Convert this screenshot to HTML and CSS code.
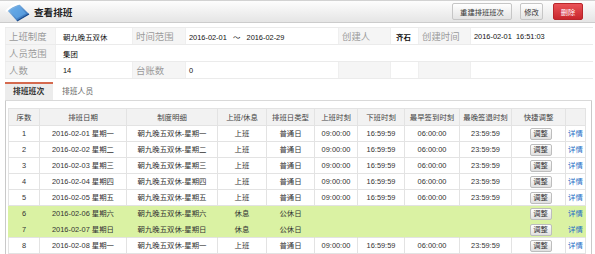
FILE: index.html
```html
<!DOCTYPE html>
<html lang="zh-CN">
<head>
    <meta charset="UTF-8">
    <title>查看排班</title>
    <link rel="stylesheet" href="styles.css">
</head>
<body>
    <div class="titlebar">
        <svg class="logo" width="26" height="20" viewBox="0 0 26 20">
            <defs>
                <linearGradient id="lg" x1="0" y1="0" x2="1" y2="1">
                    <stop offset="0" stop-color="#9ccdf4"/>
                    <stop offset="1" stop-color="#1f5fae"/>
                </linearGradient>
            </defs>
            <path d="M2 8 L14 2 L24 12 L12 19 Z" fill="url(#lg)"/>
            <path d="M5 8.6 L14 4 L21 11.4 L11.6 16.6 Z" fill="#5ea6e8" opacity="0.7"/>
            <path d="M12 19 L24 12" stroke="#17498c" stroke-width="1.2"/>
            <path d="M1 9.5 Q6 3 15.5 1.2" stroke="#fff" stroke-width="2" fill="none"/>
        </svg>
        <h1>查看排班</h1>
        <div class="actions">
            <button class="btn btn-rebuild">重建排班班次</button>
            <button class="btn btn-edit">修改</button>
            <button class="btn btn-del">删除</button>
        </div>
    </div>

    <table class="info">
        <colgroup>
            <col style="width:50px"><col style="width:77px"><col style="width:53px"><col style="width:153px">
            <col style="width:52px"><col style="width:28px"><col style="width:52px"><col style="width:122px">
        </colgroup>
        <tr>
            <td class="lbl">上班制度</td><td class="val first">朝九晚五双休</td>
            <td class="lbl">时间范围</td><td class="val">2016-02-01 &nbsp;&nbsp;～ &nbsp;&nbsp;2016-02-29</td>
            <td class="lbl">创建人</td><td class="val strong">齐石</td>
            <td class="lbl">创建时间</td><td class="val">2016-02-01 &nbsp;16:51:03</td>
        </tr>
        <tr>
            <td class="lbl">人员范围</td><td class="val first" colspan="7">集团</td>
        </tr>
        <tr>
            <td class="lbl">人数</td><td class="val first">14</td>
            <td class="lbl">台账数</td><td class="val">0</td>
            <td class="lbl"></td><td class="val"></td>
            <td class="lbl"></td><td class="val"></td>
        </tr>
    </table>

    <div class="tabs">
        <span class="tab active">排班班次</span>
        <span class="tab">排班人员</span>
    </div>

    <div class="panel">
        <table class="grid">
            <colgroup>
                <col style="width:32px"><col style="width:87px"><col style="width:91px"><col style="width:49px">
                <col style="width:48px"><col style="width:43px"><col style="width:47px"><col style="width:55px">
                <col style="width:52px"><col style="width:54px"><col style="width:20px">
            </colgroup>
            <thead>
                <tr>
                    <th>序数</th><th>排班日期</th><th>制度明细</th><th>上班/休息</th><th>排班日类型</th>
                    <th>上班时刻</th><th>下班时刻</th><th>最早签到时刻</th><th>最晚签退时刻</th><th>快捷调整</th><th></th>
                </tr>
            </thead>
            <tbody>
                <tr>
                    <td>1</td><td>2016-02-01 星期一</td><td>朝九晚五双休-星期一</td><td>上班</td><td>普通日</td>
                    <td>09:00:00</td><td>16:59:59</td><td>06:00:00</td><td>23:59:59</td>
                    <td><button class="adj">调整</button></td><td><a class="more" href="#">详情</a></td>
                </tr>
                <tr>
                    <td>2</td><td>2016-02-02 星期二</td><td>朝九晚五双休-星期二</td><td>上班</td><td>普通日</td>
                    <td>09:00:00</td><td>16:59:59</td><td>06:00:00</td><td>23:59:59</td>
                    <td><button class="adj">调整</button></td><td><a class="more" href="#">详情</a></td>
                </tr>
                <tr>
                    <td>3</td><td>2016-02-03 星期三</td><td>朝九晚五双休-星期三</td><td>上班</td><td>普通日</td>
                    <td>09:00:00</td><td>16:59:59</td><td>06:00:00</td><td>23:59:59</td>
                    <td><button class="adj">调整</button></td><td><a class="more" href="#">详情</a></td>
                </tr>
                <tr>
                    <td>4</td><td>2016-02-04 星期四</td><td>朝九晚五双休-星期四</td><td>上班</td><td>普通日</td>
                    <td>09:00:00</td><td>16:59:59</td><td>06:00:00</td><td>23:59:59</td>
                    <td><button class="adj">调整</button></td><td><a class="more" href="#">详情</a></td>
                </tr>
                <tr>
                    <td>5</td><td>2016-02-05 星期五</td><td>朝九晚五双休-星期五</td><td>上班</td><td>普通日</td>
                    <td>09:00:00</td><td>16:59:59</td><td>06:00:00</td><td>23:59:59</td>
                    <td><button class="adj">调整</button></td><td><a class="more" href="#">详情</a></td>
                </tr>
                <tr class="rest">
                    <td>6</td><td>2016-02-06 星期六</td><td>朝九晚五双休-星期六</td><td>休息</td><td>公休日</td>
                    <td></td><td></td><td></td><td></td>
                    <td><button class="adj">调整</button></td><td><a class="more" href="#">详情</a></td>
                </tr>
                <tr class="rest last">
                    <td>7</td><td>2016-02-07 星期日</td><td>朝九晚五双休-星期日</td><td>休息</td><td>公休日</td>
                    <td></td><td></td><td></td><td></td>
                    <td><button class="adj">调整</button></td><td><a class="more" href="#">详情</a></td>
                </tr>
                <tr>
                    <td>8</td><td>2016-02-08 星期一</td><td>朝九晚五双休-星期一</td><td>上班</td><td>普通日</td>
                    <td>09:00:00</td><td>16:59:59</td><td>06:00:00</td><td>23:59:59</td>
                    <td><button class="adj">调整</button></td><td><a class="more" href="#">详情</a></td>
                </tr>
            </tbody>
        </table>
    </div>
</body>
</html>
```

FILE: styles.css
```css
body {
    margin: 0;
    font-family: "Liberation Sans", "Noto Sans CJK SC", sans-serif;
    font-size: 7.4px;
    color: #333;
    background: #fff;
}

/* title bar */
.titlebar {
    display: flex;
    align-items: center;
    height: 21px;
    padding: 0 12px 0 5px;
    border-top: 1px solid #d2d2d2;
    border-bottom: 1px solid #cccccc;
    background: linear-gradient(#fdfdfd, #e5e5e5);
}
.titlebar h1 {
    flex: 1;
    margin: 0 0 0 3px;
    font-size: 9.6px;
    font-weight: bold;
    color: #222;
}
.actions {
    display: flex;
}
.btn {
    height: 17px;
    padding: 0;
    font-family: inherit;
    font-size: 7.3px;
    color: #333;
    border: 1px solid #c6c6c6;
    border-radius: 2px;
    background: linear-gradient(#ffffff, #e3e3e3);
}
.btn-rebuild { width: 60px; }
.btn-edit { width: 23px; margin-left: 8px; }
.btn-del {
    width: 30px;
    margin-left: 10px;
    color: #fff;
    border-color: #b8262b;
    background: linear-gradient(#ea5257, #c8272d);
}

/* info table */
.info {
    width: 587px;
    margin: 4px 0 0 5px;
    border-collapse: collapse;
    table-layout: fixed;
}
.info td {
    height: 16px;
    padding: 0 3px;
    border-top: 1px solid #ebebeb;
    border-bottom: 1px solid #ebebeb;
    border-left: 1px solid #efefef;
    white-space: nowrap;
    overflow: hidden;
}
.info .lbl {
    background: #f5f5f5;
    color: #9a9a9a;
    font-size: 9.4px;
}
.info .val {
    color: #111;
    font-size: 7.4px;
}
.info .first { padding-left: 7px; }
.info .strong { font-weight: bold; padding-left: 5px; }

/* tabs */
.tabs {
    display: flex;
    height: 18px;
    margin: 3px 3px 0 5px;
    border-bottom: 1px solid #d9d9d9;
}
.tab {
    padding: 0 9px;
    line-height: 16px;
    font-size: 7.8px;
    color: #666;
    border-top: 2px solid transparent;
}
.tab.active {
    width: 32px;
    padding: 0 8px;
    font-weight: bold;
    color: #333;
    background: #ececec;
    border-top-color: #d56a4f;
}

/* schedule grid */
.panel {
    margin: 0 3px 0 5px;
    padding: 7px 5px 0 2px;
    border-left: 1px solid #c9c9c9;
    border-right: 1px solid #c9c9c9;
}
.grid {
    width: 578px;
    border-collapse: separate;
    border-spacing: 0;
    table-layout: fixed;
}
.grid th,
.grid td {
    height: 15px;
    padding: 0;
    line-height: 15px;
    text-align: center;
    white-space: nowrap;
    overflow: hidden;
    border-right: 1px solid #e3e3e3;
    border-bottom: 1px solid #e3e3e3;
}
.grid th:first-child,
.grid td:first-child {
    border-left: 1px solid #e3e3e3;
}
.grid th {
    height: 16px;
    font-weight: normal;
    color: #444;
    background: #f2f2f2;
    border-top: 1px solid #e3e3e3;
}
.grid .rest td {
    background: #daf2a3;
    border-color: #daf2a3;
}
.grid .rest.last td {
    border-bottom-color: #e3e3e3;
}
.adj {
    width: 22px;
    height: 12px;
    padding: 0;
    margin-left: 4px;
    vertical-align: middle;
    font-family: inherit;
    font-size: 7.3px;
    line-height: 10px;
    color: #333;
    border: 1px solid #bdbdbd;
    border-radius: 2px;
    background: linear-gradient(#fefefe, #e0e0e0);
}
.more {
    color: #1f6fc6;
    text-decoration: none;
}
```
